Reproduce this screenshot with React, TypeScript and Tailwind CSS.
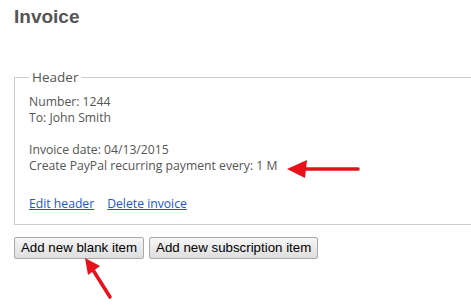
export default function App() {
  return (
    <div className="relative h-[308px] w-[471px] overflow-hidden bg-white pl-[14px] font-['Open_Sans',sans-serif] text-[#555]">
      <h1 className="pt-[6px] font-['Liberation_Sans',Arial,sans-serif] text-[19px] font-bold leading-[22px] text-[#555]">
        Invoice
      </h1>

      <fieldset className="mt-[40px] w-[480px] border border-[#ccc] pb-[12px] pl-[14px] pt-[8px]">
        <legend className="px-[3px] text-[13.5px] leading-[18px]">Header</legend>
        <div className="text-[12.2px] leading-[16px]">
          <div>Number: 1244</div>
          <div>To: John Smith</div>
          <div className="mt-[16px]">Invoice date: 04/13/2015</div>
          <div>Create PayPal recurring payment every: 1 M</div>
          <div className="mt-[22px] flex gap-[13px]">
            <a href="#" className="text-[#2255cc] underline">Edit header</a>
            <a href="#" className="text-[#2255cc] underline">Delete invoice</a>
          </div>
        </div>
      </fieldset>

      <div className="mt-[12px] flex gap-[5px] font-['Liberation_Sans',Arial,sans-serif]">
        <button className="h-[22px] rounded-[2px] border border-[#a9a9a9] bg-gradient-to-b from-[#f6f6f6] to-[#dedede] px-[6px] text-[13.3px] leading-[20px] text-black">
          Add new blank item
        </button>
        <button className="h-[22px] rounded-[2px] border border-[#a9a9a9] bg-gradient-to-b from-[#f6f6f6] to-[#dedede] px-[6px] text-[13.3px] leading-[20px] text-black">
          Add new subscription item
        </button>
      </div>

      {/* red annotation arrows */}
      <svg className="absolute left-0 top-0" width="471" height="308">
        <line x1="304" y1="169" x2="358" y2="169" stroke="#e8101a" strokeWidth="3.5" strokeLinecap="round" />
        <polygon points="287,169 307,160 305,178" fill="#e8101a" />
        <line x1="93" y1="270" x2="110" y2="297" stroke="#e8101a" strokeWidth="3.5" strokeLinecap="round" />
        <polygon points="85,258 100,266 88,275" fill="#e8101a" />
      </svg>
    </div>
  )
}
